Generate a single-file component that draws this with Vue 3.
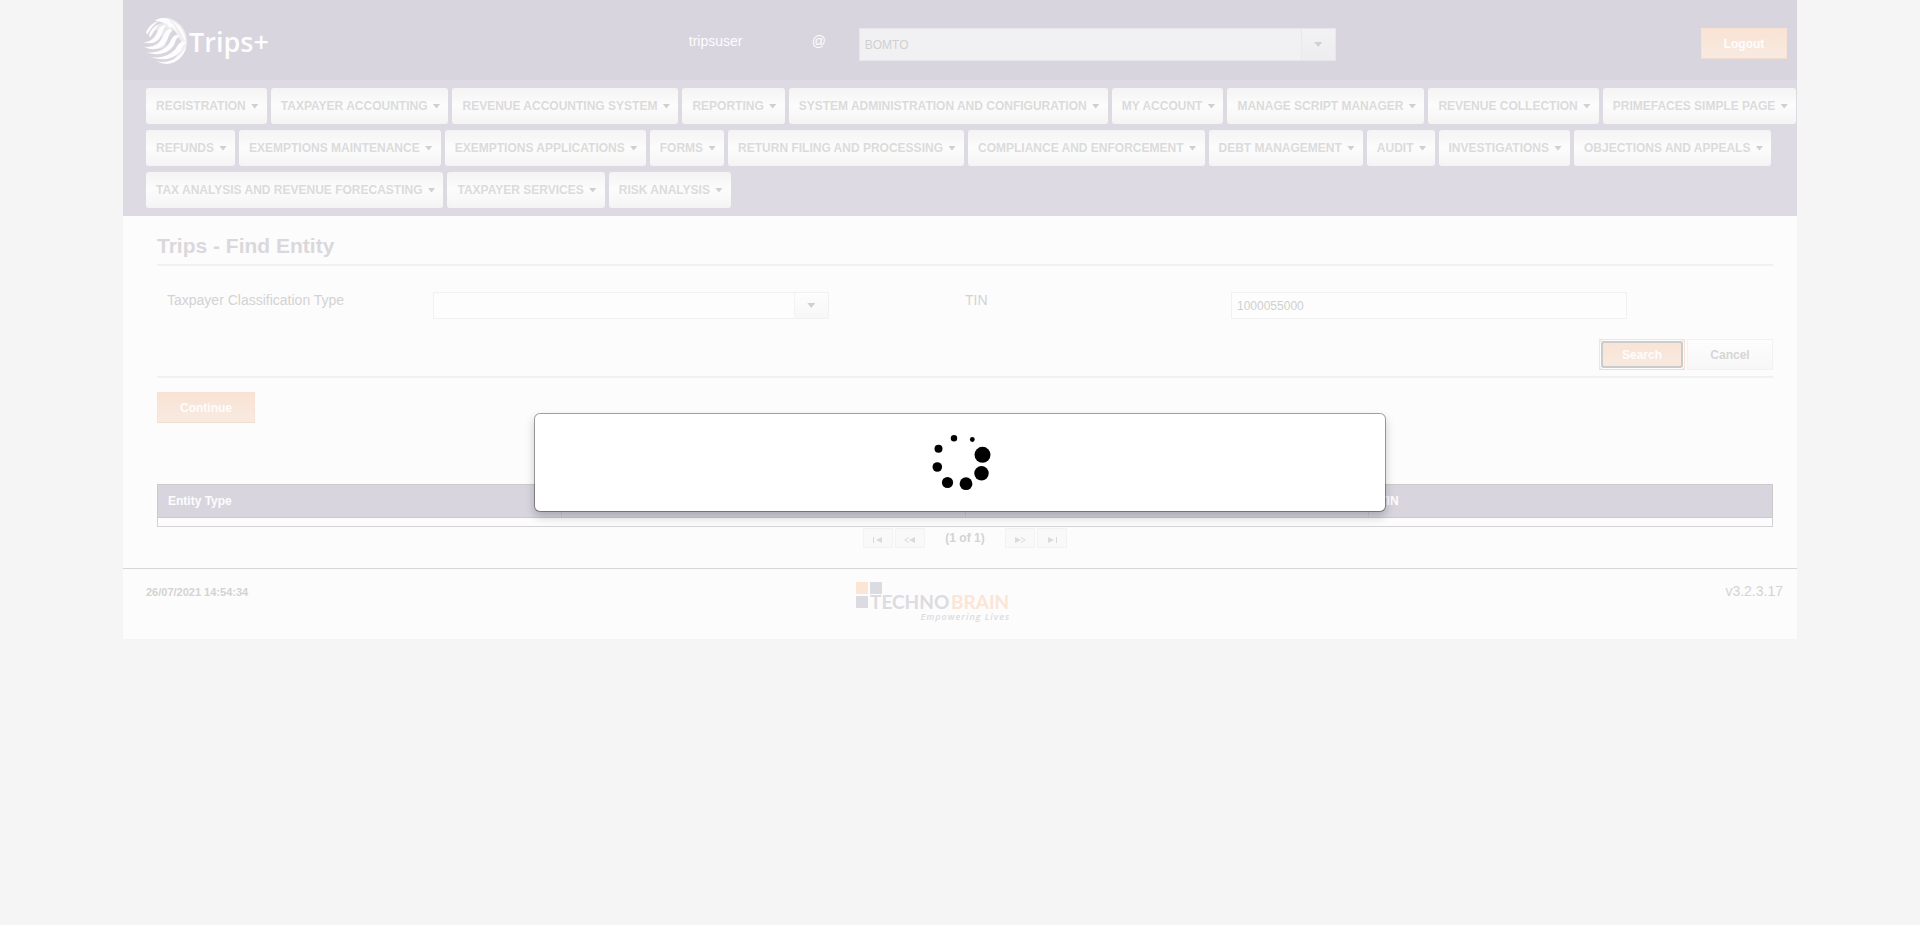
<script setup>
import { ref } from 'vue'

const menuItems = [
  'REGISTRATION', 'TAXPAYER ACCOUNTING', 'REVENUE ACCOUNTING SYSTEM', 'REPORTING',
  'SYSTEM ADMINISTRATION AND CONFIGURATION', 'MY ACCOUNT', 'MANAGE SCRIPT MANAGER',
  'REVENUE COLLECTION', 'PRIMEFACES SIMPLE PAGE', 'REFUNDS', 'EXEMPTIONS MAINTENANCE',
  'EXEMPTIONS APPLICATIONS', 'FORMS', 'RETURN FILING AND PROCESSING',
  'COMPLIANCE AND ENFORCEMENT', 'DEBT MANAGEMENT', 'AUDIT', 'INVESTIGATIONS',
  'OBJECTIONS AND APPEALS', 'TAX ANALYSIS AND REVENUE FORECASTING',
  'TAXPAYER SERVICES', 'RISK ANALYSIS',
]

const columns = ['Entity Type', '', '', 'TIN']
const office = ref('BOMTO')
const classification = ref('')
const tin = ref('1000055000')

const dots = [
  [44.3, 9.5, 2.4], [26, 8.3, 3.2], [10.5, 18.7, 4], [9.3, 37, 4.8],
  [19.5, 52.5, 5.6], [38, 53.7, 6.4], [53.5, 43.3, 7.2], [54.5, 24.8, 8],
]
</script>

<template>
  <div class="page">
    <header class="header">
      <div class="brand">
        <svg width="132" height="54" viewBox="0 0 132 54" role="img" aria-label="Trips+">
          <defs>
            <clipPath id="globe"><ellipse cx="75" cy="81" rx="66" ry="70" /></clipPath>
          </defs>
          <g transform="translate(-3 0) scale(.3333)">
            <g clip-path="url(#globe)">
              <path d="M45 10 Q92 2 122 34 Q152 70 136 116 Q118 152 75 152 Q112 134 120 108 L124 82 Q112 70 108 56 Q98 40 84 44 L72 26Z" fill="#efeef2" />
              <path d="M26 60 Q40 28 74 26 L90 44 L76 96 Q66 108 40 104 Q62 90 66 62 Q56 36 26 60Z" fill="#efeef2" opacity=".7" />
              <g fill="#fdfdfd">
                <path d="M18 55 Q28 28 58 20 Q34 36 22 62Z" />
                <path d="M26 66 Q36 40 58 30 Q44 46 32 68Z" />
                <path d="M38 18 Q60 8 84 14 Q98 24 92 44 Q84 28 70 26 Q58 22 38 18Z" />
                <path d="M9 84 Q34 86 48 62 Q58 30 78 32 Q70 44 64 64 Q48 98 9 84Z" />
                <path d="M11 98 Q52 104 68 70 Q82 36 98 48 Q88 58 82 78 Q58 120 11 98Z" />
                <path d="M16 114 Q64 122 88 88 Q102 54 118 66 Q106 76 102 94 Q74 134 16 114Z" />
                <path d="M30 128 Q76 138 106 106 Q120 76 138 84 Q128 94 122 110 Q90 150 30 128Z" />
                <path d="M48 142 Q92 150 124 120 Q134 102 142 98 Q138 118 126 130 Q92 162 48 142Z" />
                <path d="M96 20 Q122 32 134 66 Q138 76 134 82 Q122 48 96 20Z" />
                <path d="M84 20 Q104 28 112 58 Q100 36 84 34Z" />
              </g>
            </g>
          </g>
          <text x="46" y="38" class="brand-text">Trips+</text>
        </svg>
      </div>
      <span class="user">tripsuser</span>
      <span class="user">@</span>
      <div class="office">
        <div class="dropdown">
          <select v-model="office" class="select office-select" aria-label="Office">
            <option>BOMTO</option>
          </select>
          <span class="dropdown-end office-end"><span class="caret"></span></span>
        </div>
      </div>
      <div class="logout"><button class="btn primary" type="button">Logout</button></div>
    </header>

    <nav class="menu">
      <button v-for="item in menuItems" :key="item" class="menu-item" type="button">
        {{ item }}<span class="caret"></span>
      </button>
    </nav>

    <main class="main">
      <h1 class="title">Trips - Find Entity</h1>
      <form class="form" @submit.prevent>
        <div class="fields">
          <label for="classification">Taxpayer Classification Type</label>
          <div class="dropdown field">
            <select id="classification" v-model="classification" class="select">
              <option value=""></option>
            </select>
            <span class="dropdown-end"><span class="caret"></span></span>
          </div>
          <label for="tin">TIN</label>
          <input id="tin" v-model="tin" class="input field" type="text" />
        </div>
        <div class="actions">
          <button class="btn primary focused" type="submit">Search</button>
          <button class="btn plain" type="button">Cancel</button>
        </div>
      </form>
      <button class="btn continue primary" type="button">Continue</button>

      <table class="results">
        <thead>
          <tr><th v-for="(name, i) in columns" :key="i" scope="col">{{ name }}</th></tr>
        </thead>
        <tbody>
          <tr><td colspan="4"></td></tr>
        </tbody>
      </table>
      <div class="pager">
        <button class="page-btn" type="button" aria-label="First page">
          <svg width="10" height="6" viewBox="0 0 10 6"><path d="M0 0h1v6H0zM9 0v6L3 3z" /></svg>
        </button>
        <button class="page-btn" type="button" aria-label="Previous page">
          <svg width="12" height="6" viewBox="0 0 12 6"><path d="M11 0v6L5 3z" /><path class="line" d="M5 .5L.8 3L5 5.5" /></svg>
        </button>
        <span class="page-count">(1 of 1)</span>
        <button class="page-btn" type="button" aria-label="Next page">
          <svg width="12" height="6" viewBox="0 0 12 6"><path d="M1 0v6l6-3z" /><path class="line" d="M7 .5L11.2 3L7 5.5" /></svg>
        </button>
        <button class="page-btn" type="button" aria-label="Last page">
          <svg width="10" height="6" viewBox="0 0 10 6"><path d="M9 0h1v6H9zM1 0v6l6-3z" /></svg>
        </button>
      </div>
    </main>

    <footer class="footer">
      <span class="stamp">26/07/2021 14:54:34</span>
      <svg width="156" height="42" viewBox="0 0 156 42" role="img" aria-label="Techno Brain">
        <rect width="12" height="12" fill="#fbe5d5" />
        <rect x="14" width="12" height="12" fill="#dcdbe1" />
        <rect y="14" width="12" height="12" fill="#dcdbe1" />
        <text x="14" y="27" class="logo-text" fill="#dcdbe1">TECHNO</text>
        <text x="95" y="27" class="logo-text" fill="#fbe5d5">BRAIN</text>
        <text x="154" y="38" class="tagline">Empowering Lives</text>
      </svg>
      <span class="version">v3.2.3.17</span>
    </footer>
  </div>

  <div class="overlay">
    <div class="dialog" role="dialog" aria-label="Loading">
      <svg width="64" height="64" viewBox="0 0 64 64">
        <circle v-for="([x, y, r], i) in dots" :key="i" :cx="x" :cy="y" :r="r" />
      </svg>
    </div>
  </div>
</template>

<style>
body {
  background: #f5f5f5;
}
</style>

<style scoped>
.page,
.page button,
.page select,
.page input {
  font-family: "Liberation Sans", Arial, sans-serif;
}
.page {
  box-sizing: border-box;
  margin: 0 123px;
  background: #fcfcfc;
  color: #d3d3d3;
  font-size: 14px;
  line-height: 16px;
}
.page *,
.dialog {
  box-sizing: border-box;
}
.header {
  display: grid;
  grid-template-columns: 33.8% 7.35% 2.8% 28.5% 1fr;
  align-items: start;
  min-height: 80px;
  background: #d8d5df;
}
.brand {
  padding: 14px 0 0 20px;
}
.brand svg,
.footer svg,
.dialog svg {
  display: block;
}
.brand-text {
  font: 600 27px "Open Sans", sans-serif;
  fill: #fdfdfd;
}
.user {
  padding-top: 33px;
  color: #fdfdfd;
}
.office,
.logout {
  padding-top: 28px;
}
.logout {
  padding-right: 10px;
  text-align: right;
}
.dropdown {
  position: relative;
}
.select,
.input {
  display: block;
  width: 100%;
  height: 27px;
  margin: 0;
  padding: 0 5px;
  border: 1px solid #f1f1f1;
  border-radius: 0;
  outline: 0;
  appearance: none;
  background: #fdfdfd;
  color: #d0d0d0;
  font-size: 12px;
}
.office-select {
  height: 33px;
  border-color: #e7e6ea;
  background: #f1f1f3;
}
.dropdown-end {
  position: absolute;
  top: 1px;
  right: 1px;
  bottom: 1px;
  display: flex;
  align-items: center;
  justify-content: center;
  width: 34px;
  border-left: 1px solid #f3f3f3;
  background: linear-gradient(#fdfdfd, #f7f7f7);
  pointer-events: none;
}
.office-end {
  border-color: #e9e9ec;
  background: linear-gradient(#f2f2f4, #ededef);
}
.caret {
  width: 8px;
  height: 5px;
  background: #d0d0d0;
  clip-path: polygon(0 0, 100% 0, 50% 100%);
}
.btn {
  height: 31px;
  min-width: 86px;
  padding: 0 12px;
  border: 1px solid #f2f2f2;
  font-size: 12px;
  font-weight: bold;
}
.primary {
  border-color: #f9e2d3;
  border-bottom-color: #efdccf;
  background: linear-gradient(#f9e3d4, #f8eae1);
  color: #fdfdfd;
}
.plain {
  background: linear-gradient(#fdfdfd, #f7f7f7);
  color: #d6d6d6;
}
.focused {
  position: relative;
}
.focused::after {
  content: "";
  position: absolute;
  inset: 1px;
  border: 2px solid #cbcbcb;
  border-radius: 3px;
  box-shadow: 0 0 0 1px #fdfdfd;
}
.continue {
  display: block;
  min-width: 98px;
  margin-top: 14px;
}
.menu {
  display: flex;
  flex-wrap: wrap;
  gap: 6px 4px;
  padding: 8px 0 8px 23px;
  background: #dddae4;
}
.menu-item {
  display: flex;
  align-items: center;
  gap: 5px;
  height: 36px;
  padding: 0 8px 0 10px;
  border: 0;
  border-radius: 3px;
  background: linear-gradient(#f4f4f4, #fcfcfc 50%, #f4f4f4);
  color: #dbdbdb;
  font-size: 12px;
  font-weight: bold;
  white-space: nowrap;
}
.main {
  padding: 18px 24px 20px 34px;
  border-bottom: 1px solid #d6d6da;
}
.title {
  margin: 0;
  padding-bottom: 6px;
  border-bottom: 2px solid #f1f1f1;
  color: #dad8dc;
  font-size: 21px;
  line-height: 24px;
}
.form {
  padding: 26px 0 6px;
  border-bottom: 2px solid #f1f1f1;
}
.fields {
  display: grid;
  grid-template-columns: 1fr 2fr 1fr 2fr;
  padding: 0 10px;
}
.field {
  width: 74.4%;
}
.actions {
  display: flex;
  justify-content: flex-end;
  gap: 2px;
  margin-top: 20px;
}
.results {
  width: 100%;
  margin-top: 61px;
  border-collapse: collapse;
  table-layout: fixed;
  font-size: 12px;
}
.results th {
  height: 33px;
  padding: 0 10px;
  border: 1px solid #cbcacb;
  background: #d8d5df;
  color: #fdfdfd;
  text-align: left;
}
.results td {
  height: 9px;
  padding: 0;
  border: 1px solid #d3d3d3;
}
.pager {
  display: flex;
  align-items: center;
  justify-content: center;
  gap: 2px;
  margin-top: 1px;
}
.page-btn {
  width: 30px;
  height: 20px;
  padding: 2px 0 0;
  border: 1px solid #f3f3f3;
  background: #f9f9f9;
  line-height: 6px;
}
.page-btn svg {
  fill: #dadada;
}
.page-btn .line {
  fill: none;
  stroke: #dadada;
}
.page-count {
  padding: 0 18px;
  font-size: 12px;
  font-weight: bold;
}
.footer {
  display: grid;
  grid-template-columns: 43.8% 1fr auto;
  align-items: start;
  min-height: 70px;
  padding-top: 13px;
}
.stamp {
  padding: 2px 0 0 23px;
  font-size: 11px;
  font-weight: bold;
}
.version {
  padding: 1px 14px 0 0;
}
.logo-text {
  font: bold 19px Lato, sans-serif;
}
.tagline {
  fill: #dcdbe1;
  font: italic 600 9px "Open Sans", sans-serif;
  letter-spacing: 1px;
  text-anchor: end;
}
.overlay {
  position: fixed;
  inset: 0;
  display: flex;
  align-items: center;
  justify-content: center;
}
.dialog {
  display: flex;
  justify-content: center;
  width: 852px;
  max-width: 90%;
  padding: 16px 0 17px;
  border: 1px solid rgba(0, 0, 0, 0.35);
  border-radius: 6px;
  background: #fff;
  background-clip: padding-box;
  box-shadow: 0 5px 10px rgba(0, 0, 0, 0.2);
}
</style>
